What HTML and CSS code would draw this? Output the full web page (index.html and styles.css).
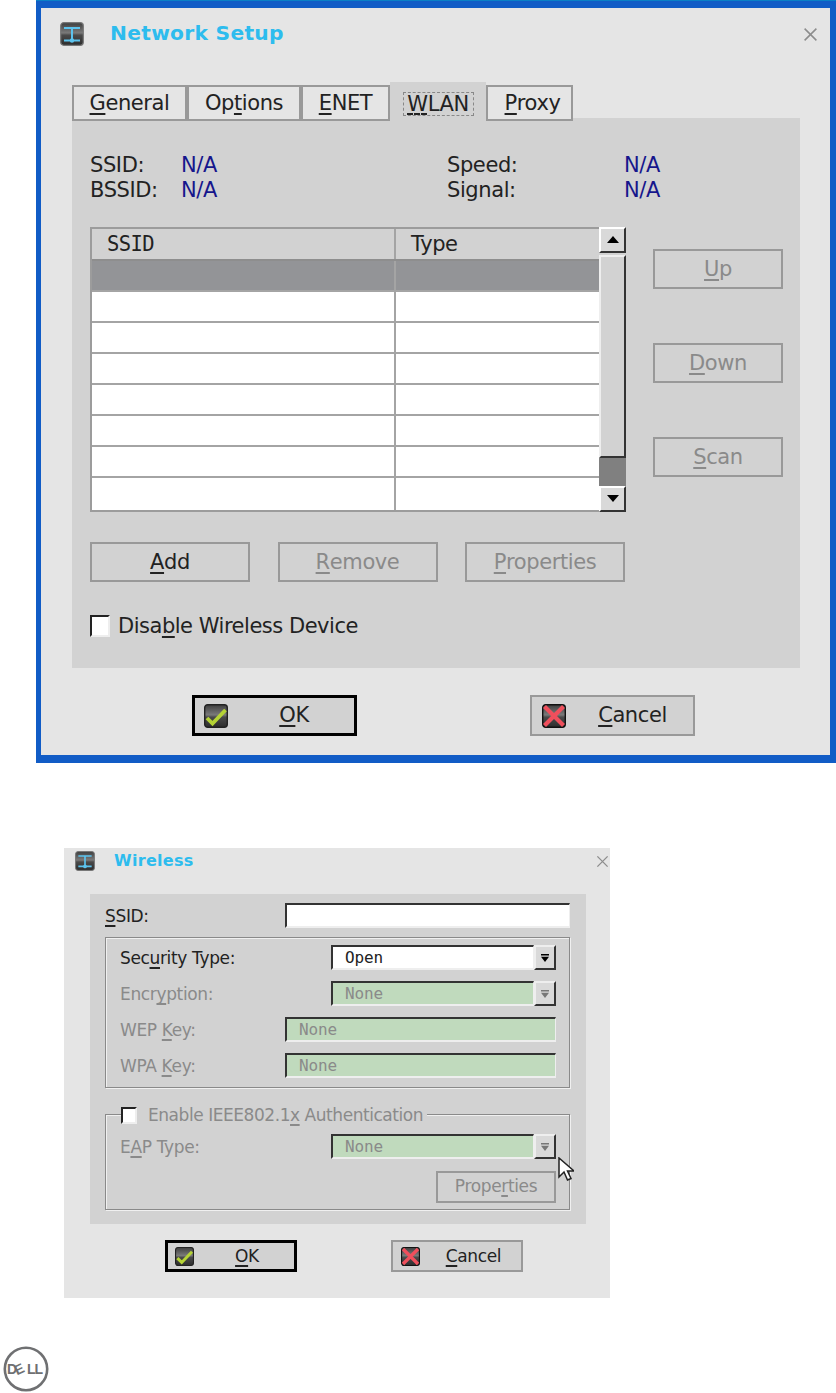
FILE: index.html
```html
<!DOCTYPE html>
<html lang="en">
<head>
<meta charset="utf-8">
<title>Network Setup</title>
<link rel="stylesheet" href="styles.css">
</head>
<body>
<svg class="defs" width="0" height="0" aria-hidden="true">
  <defs>
    <linearGradient id="g" x1="0" y1="0" x2="0" y2="1">
      <stop offset="0" stop-color="#3d3d3d"/><stop offset=".45" stop-color="#7a7a7a"/><stop offset=".55" stop-color="#4a4a4a"/><stop offset="1" stop-color="#2c2c2c"/>
    </linearGradient>
    <symbol id="net" viewBox="0 0 24 24">
      <rect x=".7" y=".7" width="22.6" height="22.6" rx="3" fill="url(#g)" stroke="#777" stroke-width="1.2"/>
      <path d="M4 6h16M12 6v12M4 18.500h16" fill="none" stroke="#5cc3ee" stroke-width="2"/>
      <circle cx="12" cy="18.500" r="2.200" fill="#5cc3ee"/>
    </symbol>
    <symbol id="chk" viewBox="0 0 24 24">
      <rect x=".7" y=".7" width="22.600" height="22.600" rx="3" fill="url(#g)" stroke="#222" stroke-width="1.400"/>
      <path d="M3 14l5.500 5.500L21.500 6" fill="none" stroke="#b5d335" stroke-width="3.800"/>
    </symbol>
    <symbol id="xx" viewBox="0 0 24 24">
      <rect x=".7" y=".7" width="22.600" height="22.600" rx="3" fill="url(#g)" stroke="#111" stroke-width="1.400"/>
      <path d="M2.500 2.500l19 19M21.500 2.500l-19 19" fill="none" stroke="#ef4f5c" stroke-width="4.200"/>
    </symbol>
    <symbol id="cross" viewBox="0 0 14 14">
      <path d="M1.500 1.500l11 11M12.500 1.500l-11 11" fill="none" stroke="#8c8c8c" stroke-width="1.400"/>
    </symbol>
    <symbol id="drop" viewBox="0 0 10 10">
      <path d="M1 1h8v1.400H1zM1 3.800h8L5 9z"/>
    </symbol>
  </defs>
</svg>

<section class="dlg dlg-main">
  <header class="title">
    <svg class="ico-net"><use href="#net"/></svg>
    <h1>Network Setup</h1>
    <svg class="close"><use href="#cross"/></svg>
  </header>

  <nav class="tabs">
    <span class="tab t-general"><u>G</u>eneral</span>
    <span class="tab t-options">Op<u>t</u>ions</span>
    <span class="tab t-enet"><u>E</u>NET</span>
    <span class="tab t-wlan"><span class="focus"><u class="dash">W</u>LAN</span></span>
    <span class="tab t-proxy"><u>P</u>roxy</span>
  </nav>

  <div class="pane">
    <div class="info">
      <span>SSID:</span><span class="val">N/A</span><span>Speed:</span><span class="val">N/A</span>
      <span>BSSID:</span><span class="val">N/A</span><span>Signal:</span><span class="val">N/A</span>
    </div>

    <div class="list-row">
      <div class="list">
        <div class="grid">
          <div class="row head"><span class="c1 mono">SSID</span><span class="c2">Type</span></div>
          <div class="row sel"><span class="c1"></span><span class="c2"></span></div>
          <div class="row"><span class="c1"></span><span class="c2"></span></div>
          <div class="row"><span class="c1"></span><span class="c2"></span></div>
          <div class="row"><span class="c1"></span><span class="c2"></span></div>
          <div class="row"><span class="c1"></span><span class="c2"></span></div>
          <div class="row"><span class="c1"></span><span class="c2"></span></div>
          <div class="row"><span class="c1"></span><span class="c2"></span></div>
          <div class="row"><span class="c1"></span><span class="c2"></span></div>
        </div>
        <div class="scroll">
          <span class="sb-btn"><i class="arr up"></i></span>
          <span class="thumb"></span>
          <span class="trough"></span>
          <span class="sb-btn"><i class="arr down"></i></span>
        </div>
      </div>
      <div class="side">
        <span class="btn off side-btn"><u>U</u>p</span>
        <span class="btn off side-btn"><u>D</u>own</span>
        <span class="btn off side-btn"><u>S</u>can</span>
      </div>
    </div>

    <div class="actions">
      <span class="btn act"><u>A</u>dd</span>
      <span class="btn off act"><u>R</u>emove</span>
      <span class="btn off act"><u>P</u>roperties</span>
    </div>

    <label class="disable"><span class="box box-lg"></span><span class="dis-t">Disa<u>b</u>le Wireless Device</span></label>
  </div>

  <footer class="foot">
    <span class="btn big default"><svg class="ico-btn"><use href="#chk"/></svg><span class="lbl"><u>O</u>K</span></span>
    <span class="btn big cancel"><svg class="ico-btn"><use href="#xx"/></svg><span class="lbl"><u>C</u>ancel</span></span>
  </footer>
</section>

<section class="dlg dlg-wifi">
  <header class="title">
    <svg class="ico-net"><use href="#net"/></svg>
    <h2>Wireless</h2>
    <svg class="close"><use href="#cross"/></svg>
  </header>

  <div class="panel">
    <div class="f-row ssid"><span class="f-lbl"><u>S</u>SID:</span><span class="field wide-ssid"></span></div>

    <div class="group g1">
      <div class="f-row"><span class="f-lbl">Sec<u>u</u>rity Type:</span>
        <span class="combo"><span class="field cf">Open</span><span class="cbtn"><svg class="drop"><use href="#drop"/></svg></span></span></div>
      <div class="f-row dis"><span class="f-lbl">Encr<u>y</u>ption:</span>
        <span class="combo"><span class="field cf green">None</span><span class="cbtn"><svg class="drop"><use href="#drop"/></svg></span></span></div>
      <div class="f-row dis"><span class="f-lbl">WEP <u>K</u>ey:</span><span class="field green long">None</span></div>
      <div class="f-row dis"><span class="f-lbl">WPA <u>K</u>ey:</span><span class="field green long">None</span></div>
    </div>

    <div class="group g2">
      <div class="legend"><span class="box box-sm"></span><span class="leg-t">Enable IEEE802.1<u>x</u> Authentication</span></div>
      <div class="f-row dis"><span class="f-lbl">E<u>A</u>P Type:</span>
        <span class="combo"><span class="field cf green">None</span><span class="cbtn"><svg class="drop"><use href="#drop"/></svg></span></span></div>
      <div class="prop-row"><span class="btn off prop">Prope<u>r</u>ties</span></div>
      <svg class="cursor" viewBox="0 0 16 24"><path d="M1 1v19l5-5 3.500 8 3.500-1.500L9.500 14H16z" fill="#fff" stroke="#222" stroke-width="1.500"/></svg>
    </div>
  </div>

  <footer class="foot">
    <span class="btn big default"><svg class="ico-btn"><use href="#chk"/></svg><span class="lbl"><u>O</u>K</span></span>
    <span class="btn big cancel"><svg class="ico-btn"><use href="#xx"/></svg><span class="lbl"><u>C</u>ancel</span></span>
  </footer>
</section>

<div class="logo" aria-label="Dell">
  <svg viewBox="0 0 46 46" width="46" height="46">
    <circle cx="23" cy="23" r="21.200" fill="none" stroke="#6f7072" stroke-width="2.600"/>
    <text x="4" y="28" class="lg">D</text>
    <text x="0" y="0" class="lg" transform="translate(14 29.500) rotate(-25)">E</text>
    <text x="24" y="28" class="lg">L</text>
    <text x="31.500" y="28" class="lg">L</text>
  </svg>
</div>
</body>
</html>
```

FILE: styles.css
```css
* { box-sizing: border-box; }
html, body { margin: 0; padding: 0; background: #fff; }
body {
  width: 836px;
  height: 1393px;
  overflow: hidden;
  font-family: "DejaVu Sans", sans-serif;
  color: #222;
}
.defs { position: absolute; }
u {
  text-decoration: underline;
  text-decoration-thickness: 2px;
  text-underline-offset: 3px;
  text-decoration-skip-ink: none;
}
u.dash { text-decoration-style: dashed; }

.dlg { background: #e5e5e5; display: flex; flex-direction: column; }
.dlg-main {
  margin: 1px 0 0 36px;
  width: 800px;
  height: 762px;
  border-style: solid;
  border-color: #115cc6;
  border-width: 7px 6px 8px 5px;
  box-shadow: 0 -1px 0 #0a80c6;
  font-size: 21px;
  letter-spacing: -.4px;
}
.dlg-wifi {
  margin: 85px 0 0 64px;
  width: 546px;
  height: 450px;
  font-size: 17px;
  letter-spacing: -.35px;
}

/* title bars */
.title { display: flex; align-items: center; }
.title h1, .title h2 { margin: 0; font-weight: 700; color: #2dbcee; letter-spacing: .3px; }
.dlg-main .title { padding: 14px 12px 0 19px; }
.dlg-main .ico-net { width: 24px; height: 24px; }
.dlg-main h1 { font-size: 20.200px; margin: -2px 0 0 26px; line-height: 24px; }
.dlg-main .close { width: 15px; height: 15px; margin-left: auto; margin-top: 1px; }
.dlg-wifi .title { padding: 3px 1px 0 11px; }
.dlg-wifi .ico-net { width: 20px; height: 20px; }
.dlg-wifi h2 { font-size: 16px; margin-left: 19px; line-height: 18px; }
.dlg-wifi .close { width: 13px; height: 13px; margin-left: auto; margin-top: 1px; }

/* tabs */
.tabs {
  display: flex;
  align-items: flex-end;
  margin: 36px 0 -3px 31px;
  height: 39px;
  position: relative;
  z-index: 1;
}
.tab {
  height: 36px;
  border: 2px solid #999;
  background: #e5e5e5;
  display: flex;
  align-items: center;
  justify-content: center;
}
.t-general { width: 115px; }
.t-options { width: 114px; }
.t-enet { width: 89px; }
.t-wlan { width: 96px; height: 39px; background: #d2d2d2; border: 0; padding: 4px 0 0; }
.t-proxy { width: 87px; padding-left: 6px; }
.focus { border: 1px dashed #888; width: 71px; height: 24px; display: flex; align-items: center; justify-content: center; }

/* pane */
.pane {
  margin-left: 31px;
  width: 728px;
  height: 550px;
  background: #d2d2d2;
  padding: 34px 0 0 18px;
}
.info {
  display: grid;
  grid-template-columns: 91px 266px 177px 1fr;
  grid-auto-rows: 25.500px;
  align-items: center;
}
.val { color: #16168c; }

.list-row { display: flex; margin-top: 23.500px; }
.list { display: flex; width: 536px; height: 285px; }
.grid {
  width: 509px;
  border: 2px solid #9c9c9c;
  border-right: 0;
  display: grid;
  grid-template-rows: 32px repeat(8, 1fr);
  background: #fff;
}
.row { display: flex; border-bottom: 2px solid #a4a4a4; align-items: center; }
.row:last-child { border-bottom: 0; }
.row .c1 { width: 304px; height: 100%; border-right: 2px solid #a4a4a4; padding-left: 15px; display: flex; align-items: center; }
.row .c2 { flex: 1; height: 100%; padding-left: 15px; display: flex; align-items: center; }
.head { background: #d2d2d2; border-bottom-color: #8e8e8e; }
.mono { font-family: "DejaVu Sans Mono", monospace; font-size: 20.500px; letter-spacing: -.6px; }
.sel { background: #939497; border-bottom-color: #a4a4a4; }

.scroll { width: 27px; display: flex; flex-direction: column; background: #d2d2d2; }
.sb-btn {
  height: 26px;
  background: #d9d9d9;
  border: 2px solid;
  border-color: #fff #333 #333 #fff;
  display: flex;
  align-items: center;
  justify-content: center;
}
.thumb {
  margin-top: 2px;
  height: 203px;
  background: #d2d2d2;
  border: 2px solid;
  border-color: #eee #333 #333 #eee;
}
.trough { flex: 1; background: #808080; }
.arr { width: 0; height: 0; border-left: 6px solid transparent; border-right: 6px solid transparent; }
.arr.up { border-bottom: 7px solid #000; }
.arr.down { border-top: 7px solid #000; }

.side { margin-left: 27px; padding-top: 22px; display: flex; flex-direction: column; gap: 54px; }
.btn {
  background: #d2d2d2;
  border: 2px solid #999;
  display: flex;
  align-items: center;
  justify-content: center;
  color: #222;
}
.off { color: #8a8a8a; }
.side-btn { width: 130px; height: 40px; padding-top: 1px; }

.actions { display: flex; gap: 27.500px; margin-top: 30px; }
.act { width: 160px; height: 40px; }

.disable { display: flex; align-items: center; margin-top: 33px; height: 22px; }
.dis-t { letter-spacing: -.48px; padding-top: 1px; }
.box { display: block; background: #fff; border: 2px solid; border-color: #222 #eee #eee #222; }
.box-lg { width: 20px; height: 22px; margin-right: 8px; }

/* footer buttons */
.foot { display: flex; }
.big { justify-content: flex-start; }
.big .lbl { flex: 1; text-align: center; padding-left: 6px; }
.default { border: 3px solid #000; }
.dlg-main .foot { margin: 27px 0 0 151px; }
.dlg-main .big { width: 165px; height: 41px; padding-left: 10px; }
.dlg-main .default { padding-left: 9px; }
.dlg-main .cancel { margin-left: 173px; }
.dlg-main .ico-btn { width: 24px; height: 24px; }
.dlg-main .lbl { padding-bottom: 2px; }
.dlg-wifi .foot { margin: 16px 0 0 101px; }
.dlg-wifi .big { width: 132px; height: 32px; padding-left: 8px; }
.dlg-wifi .default { padding-left: 7px; }
.dlg-wifi .cancel { margin-left: 94px; }
.dlg-wifi .ico-btn { width: 19px; height: 19px; }

/* wireless form */
.panel {
  margin: 23px 0 0 26px;
  width: 496px;
  height: 330px;
  background: #d2d2d2;
  padding: 9px 16px 0 15px;
}
.f-row { display: flex; align-items: center; justify-content: space-between; height: 25px; }
.dis .f-lbl { color: #8a8a8a; }
.field {
  display: flex;
  align-items: center;
  height: 25px;
  background: #fff;
  border: 2px solid;
  border-color: #333 #eee #eee #333;
  font-family: "DejaVu Sans Mono", monospace;
  font-size: 16px;
  letter-spacing: -.1px;
  padding-left: 12px;
  border-right-width: 1px;
}
.wide-ssid { width: 285px; }
.green { background: #c0dabd; color: #8a8a8a; }
.long { width: 271px; }
.combo { display: flex; width: 225px; }
.cf { width: 203px; }
.cbtn {
  width: 22px;
  height: 25px;
  background: #d9d9d9;
  border: 2px solid;
  border-color: #eee #333 #333 #eee;
  display: flex;
  align-items: center;
  justify-content: center;
}
.drop { width: 10px; height: 10px; fill: #000; }
.dis .drop { fill: #777; }

.group {
  position: relative;
  border: 1px solid #8a8a8a;
  box-shadow: 1px 1px 0 #f0f0f0, inset 1px 1px 0 #f0f0f0;
  padding: 0 13px 0 14px;
}
.g1 { margin-top: 9px; height: 151px; padding-top: 7px; display: flex; flex-direction: column; gap: 11px; }
.g2 { margin-top: 26px; height: 96px; padding-top: 19px; }
.legend {
  position: absolute;
  left: 15px;
  top: -8px;
  display: flex;
  align-items: center;
  background: #d2d2d2;
  padding-right: 4px;
  height: 16px;
  color: #8a8a8a;
}
.leg-t { letter-spacing: -.45px; }
.box-sm { width: 16px; height: 17px; margin-right: 11px; }
.prop-row { display: flex; justify-content: flex-end; margin-top: 12px; }
.prop { width: 120px; height: 32px; padding-bottom: 3px; }
.cursor { position: absolute; left: 452px; top: 42px; width: 16px; height: 24px; }

/* logo */
.logo { margin: 48px 0 0 2.500px; width: 46px; height: 46px; }
.lg { font-family: "Liberation Sans", sans-serif; font-weight: 700; font-size: 14px; fill: #6f7072; letter-spacing: 0; }
```
